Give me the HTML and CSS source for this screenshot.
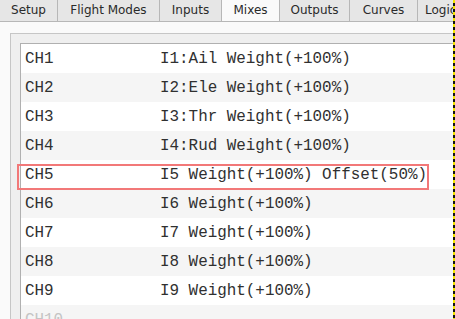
FILE: index.html
```html
<!DOCTYPE html>
<html>
<head>
    <meta name='viewport' content='width=device-width, initial-scale=1'>
    <link rel="stylesheet" href="styles.css">
</head>
<body>
<div class="tabs">
    <div class="tab setup">Setup</div>
    <div class="tab modes">Flight Modes</div>
    <div class="tab inputs">Inputs</div>
    <div class="tab mixes active">Mixes</div>
    <div class="tab outputs">Outputs</div>
    <div class="tab curves">Curves</div>
    <div class="tab last">Logical Switches</div>
</div>

<div class="content">
    <div class="group">
        <div class="list">
            <div class="row"><span class="ch">CH1</span><span>I1:Ail Weight(+100%)</span></div>
            <div class="row"><span class="ch">CH2</span><span>I2:Ele Weight(+100%)</span></div>
            <div class="row"><span class="ch">CH3</span><span>I3:Thr Weight(+100%)</span></div>
            <div class="row"><span class="ch">CH4</span><span>I4:Rud Weight(+100%)</span></div>
            <div class="row"><span class="ch">CH5</span><span>I5 Weight(+100%) Offset(50%)</span></div>
            <div class="row"><span class="ch">CH6</span><span>I6 Weight(+100%)</span></div>
            <div class="row"><span class="ch">CH7</span><span>I7 Weight(+100%)</span></div>
            <div class="row"><span class="ch">CH8</span><span>I8 Weight(+100%)</span></div>
            <div class="row"><span class="ch">CH9</span><span>I9 Weight(+100%)</span></div>
            <div class="row empty"><span class="ch">CH10</span><span></span></div>
        </div>
    </div>
</div>

<div class="highlight"></div>
<div class="edge"></div>
</body>
</html>
```

FILE: styles.css
```css
body {
    margin: 0;
    background: #fafafa;
    overflow: hidden;
    height: 319px;
}

.tabs {
    display: flex;
    height: 21px;
    border-bottom: 1px solid #b7b7b7;
    font-family: 'DejaVu Sans', sans-serif;
    font-size: 12px;
    color: #2a2a2a;
    white-space: nowrap;
    overflow: hidden;
}

.tab {
    flex: none;
    box-sizing: border-box;
    text-align: center;
    line-height: 21px;
    background: #e6e6e6;
    border-right: 1px solid #b7b7b7;
}

.setup   { width: 58px; }
.modes   { width: 102px; }
.inputs  { width: 62px; }
.mixes   { width: 58px; }
.outputs { width: 70px; }
.curves  { width: 68px; }

.tab.last {
    width: 120px;
    padding-left: 7px;
    text-align: left;
}

.tab.active {
    background: #fafafa;
    height: 22px;
}

.content {
    padding: 11px 0 0 10px;
}

.group {
    width: 1000px;
    height: 400px;
    padding: 9px 0 0 9px;
    background: #efefef;
    border: 1px solid #c6c6c6;
}

.list {
    background: #fff;
    border: 1px solid #b0b0b0;
    font-family: 'Liberation Mono', monospace;
    font-size: 15.9px;
    color: #303030;
}

.row {
    display: flex;
    align-items: center;
    height: 29px;
    padding-left: 4px;
    white-space: pre;
}

.row:nth-child(even) {
    background: #f5f5f5;
}

.row.empty {
    color: #c4c4c4;
}

.ch {
    width: 135px;
    flex: none;
}

.highlight {
    position: absolute;
    left: 17px;
    top: 164px;
    width: 408px;
    height: 22px;
    border: 2px solid #f27878;
}

.edge {
    position: absolute;
    left: 453px;
    top: 0;
    width: 2px;
    height: 319px;
    background: repeating-linear-gradient(to bottom, #f5e600 0 3px, #111 3px 6px);
}
```
